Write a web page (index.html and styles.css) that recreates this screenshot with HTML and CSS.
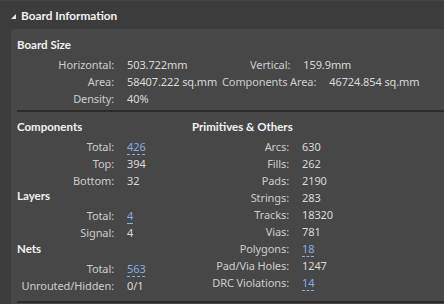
FILE: index.html
```html
<!DOCTYPE html>
<html lang="en">
  <head>
    <meta charset="UTF-8" />
    <title>Board Information</title>
    <link rel="stylesheet" href="styles.css">
  </head>
  <body>
    <div class="titlebar">
      <span class="caret"></span>
      <span class="title">Board Information</span>
    </div>
    <div class="panel">
      <div class="section">
        <div class="heading">Board Size</div>
        <div class="size-grid">
          <span class="label">Horizontal:</span>
          <span class="value">503.722mm</span>
          <div class="pair pair-short">
            <span class="label">Vertical:</span>
            <span class="value">159.9mm</span>
          </div>

          <span class="label">Area:</span>
          <span class="value">58407.222 sq.mm</span>
          <div class="pair">
            <span class="label">Components Area:</span>
            <span class="value">46724.854 sq.mm</span>
          </div>

          <span class="label">Density:</span>
          <span class="value">40%</span>
          <span></span>
        </div>
      </div>

      <div class="divider"></div>

      <div class="columns">
        <div class="column">
          <div class="heading">Components</div>
          <div class="rows">
            <span class="label">Total:</span><span class="value"><a class="link">426</a></span>
            <span class="label">Top:</span><span class="value">394</span>
            <span class="label">Bottom:</span><span class="value">32</span>
          </div>
          <div class="heading sub">Layers</div>
          <div class="rows">
            <span class="label">Total:</span><span class="value"><a class="link">4</a></span>
            <span class="label">Signal:</span><span class="value">4</span>
          </div>
          <div class="heading">Nets</div>
          <div class="rows">
            <span class="label">Total:</span><span class="value"><a class="link">563</a></span>
            <span class="label">Unrouted/Hidden:</span><span class="value">0/1</span>
          </div>
        </div>

        <div class="column">
          <div class="heading">Primitives &amp; Others</div>
          <div class="rows">
            <span class="label">Arcs:</span><span class="value">630</span>
            <span class="label">Fills:</span><span class="value">262</span>
            <span class="label">Pads:</span><span class="value">2190</span>
            <span class="label">Strings:</span><span class="value">283</span>
            <span class="label">Tracks:</span><span class="value">18320</span>
            <span class="label">Vias:</span><span class="value">781</span>
            <span class="label">Polygons:</span><span class="value"><a class="link">18</a></span>
            <span class="label">Pad/Via Holes:</span><span class="value">1247</span>
            <span class="label">DRC Violations:</span><span class="value"><a class="link">14</a></span>
          </div>
        </div>
      </div>

      <div class="divider bottom"></div>
    </div>
  </body>
</html>
```

FILE: styles.css
```css
* {
  padding: 0;
  margin: 0;
  box-sizing: border-box;
  font-family: "Noto Sans", "Open Sans", sans-serif;
}

body {
  width: 444px;
  height: 304px;
  overflow: hidden;
  background-color: #3c3c3c;
  border-top: 1px solid #454545;
  color: #d4d4d4;
  font-size: 11px;
  letter-spacing: -0.1px;
}

.titlebar {
  height: 28px;
  display: flex;
  align-items: center;
  padding-left: 11px;
}

.caret {
  width: 0;
  height: 0;
  border-left: 5px solid transparent;
  border-bottom: 5px solid #e6e6e6;
  margin-right: 5px;
  margin-top: 2px;
}

.title {
  font-family: "Lato", sans-serif;
  font-size: 11.8px;
  font-weight: bold;
  letter-spacing: 0;
  color: #f2f2f2;
}

.panel {
  margin-left: 11px;
  height: 276px;
  background-color: #474747;
  border-top-left-radius: 3px;
  padding-left: 6px;
}

.section {
  padding-top: 8px;
}

.heading {
  font-family: "Lato", sans-serif;
  font-size: 11.5px;
  font-weight: bold;
  letter-spacing: 0;
  color: #f2f2f2;
  line-height: 16px;
  height: 16px;
}

.size-grid {
  display: grid;
  grid-template-columns: 97px 82px auto;
  column-gap: 13px;
  margin-top: 3px;
  line-height: 17px;
}

.label {
  text-align: right;
  color: #cdcdcd;
  white-space: nowrap;
}

.value {
  color: #dadada;
  white-space: nowrap;
}

.pair {
  display: flex;
  gap: 13px;
}

.pair-short {
  padding-left: 28px;
}

.divider {
  height: 2px;
  background-color: #2c2c2c;
  margin-top: 3px;
}

.divider.bottom {
  margin-top: 7px;
}

.columns {
  display: flex;
  padding-top: 7px;
}

.column {
  width: 175px;
}

.rows {
  display: grid;
  grid-template-columns: 97px auto;
  column-gap: 13px;
  line-height: 17px;
  margin-top: 3px;
}

.heading.sub {
  margin-top: -1px;
}

.link {
  color: #86aee2;
  text-decoration: underline dashed #86aee2;
  text-underline-offset: 3px;
}
```
